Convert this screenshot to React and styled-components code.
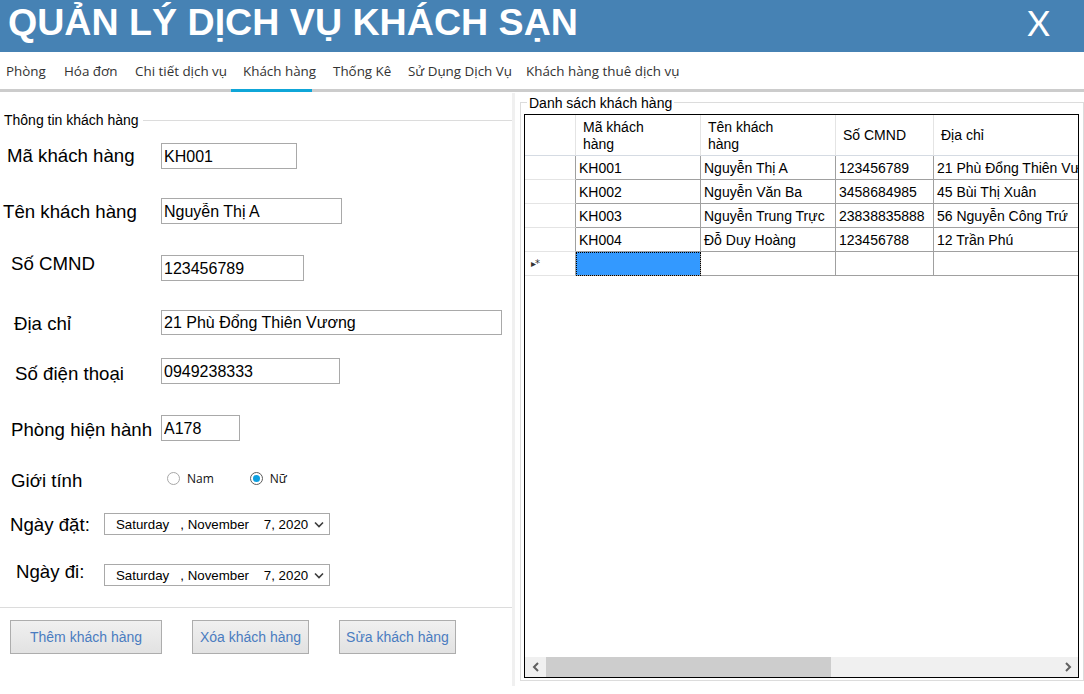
import React from 'react';
import styled, { createGlobalStyle, css } from 'styled-components';

const GlobalStyle = createGlobalStyle`
  html, body { margin: 0; padding: 0; background: #ffffff; }
  body { font-family: "Liberation Sans", Arial, sans-serif; color: #000; }
  *, *::before, *::after { box-sizing: border-box; }
`;

const Window = styled.div`
  width: 1084px;
  height: 694px;
  display: flex;
  flex-direction: column;
  overflow: hidden;
  background: #fff;
`;

const TitleBar = styled.header`
  flex: none;
  height: 52px;
  background: #4682b4;
  color: #fff;
  display: flex;
  justify-content: space-between;
  align-items: flex-start;
  padding: 0 34px 0 8px;
`;

const Title = styled.h1`
  margin: 0;
  font: 700 37.6px/44px "Liberation Sans", Arial, sans-serif;
  white-space: nowrap;
`;

const CloseButton = styled.span`
  padding-top: 1px;
  font: 400 35px/42px Lato, "Open Sans", sans-serif;
  cursor: pointer;
`;

const TabBar = styled.nav`
  flex: none;
  height: 40px;
  display: flex;
  align-items: stretch;
  padding-left: 6px;
  border-bottom: 3px solid #cccccc;
  font: 400 13.4px "Open Sans", sans-serif;
  color: #333;
`;

const Tab = styled.span`
  position: relative;
  flex: none;
  width: ${p => (p.$w ? `${p.$w}px` : 'auto')};
  display: flex;
  align-items: center;
  white-space: nowrap;
  ${p => p.$active && css`
    &::after {
      content: '';
      position: absolute;
      left: -12px;
      width: 81px;
      bottom: -3px;
      height: 3px;
      background: #0fa6d8;
    }
  `}
`;

const Body = styled.div`
  flex: 1;
  display: flex;
  min-height: 0;
`;

const LeftPanel = styled.section`
  width: 512px;
  flex: none;
  display: flex;
  flex-direction: column;
`;

const Splitter = styled.div`
  width: 3px;
  flex: none;
  background: #f0f0f0;
  margin: 1px 0 8px;
`;

const RightPanel = styled.section`
  flex: 1;
  min-width: 0;
  padding: 1px 0 0 5px;
`;

const GroupHeader = styled.div`
  display: flex;
  align-items: center;
  height: 16px;
  margin-top: 20px;
  padding-left: 4px;
  font: 14px/16px "Liberation Sans", Arial, sans-serif;
  white-space: nowrap;
`;

const GroupRule = styled.div`
  flex: 1;
  margin-left: 4px;
  border-top: 1px solid #dcdcdc;
`;

const FieldRow = styled.div`
  display: grid;
  grid-template-columns: ${p => p.$cx}px 1fr;
  align-items: start;
  margin-top: ${p => p.$mt}px;
`;

const FieldLabel = styled.label`
  padding-left: ${p => p.$lx}px;
  margin-top: ${p => p.$ly || 0}px;
  font: 18.67px/22px "Liberation Sans", Arial, sans-serif;
  white-space: nowrap;
`;

const Control = styled.div`
  margin-top: ${p => p.$cy || 0}px;
  display: flex;
  align-items: center;
`;

const TextBox = styled.input`
  width: ${p => p.$w}px;
  height: ${p => p.$h || 26}px;
  border: 1px solid #a9a9a9;
  padding: 1px 2px 0;
  margin: 0;
  font: 16px "Liberation Sans", Arial, sans-serif;
  color: #000;
  background: #fff;
  outline: none;
`;

const RadioGroup = styled.div`
  display: flex;
  align-items: center;
  height: 14px;
`;

const RadioOption = styled.span`
  display: flex;
  align-items: center;
  gap: 7px;
  margin-right: ${p => p.$mr || 0}px;
  font: 12px "Open Sans", sans-serif;
  color: #111;
`;

const RadioDot = styled.span`
  width: 13px;
  height: 13px;
  border-radius: 50%;
  border: 1px solid ${p => (p.$checked ? '#5c5c5c' : '#a8a8a8')};
  background: #fff;
  display: flex;
  align-items: center;
  justify-content: center;
  &::after {
    content: '';
    width: 7px;
    height: 7px;
    border-radius: 50%;
    background: ${p => (p.$checked ? '#0c9fe0' : 'transparent')};
  }
`;

const DateBox = styled.div`
  width: 226px;
  height: 22px;
  border: 1px solid #a9a9a9;
  background: #fff;
  display: flex;
  align-items: center;
  justify-content: space-between;
  padding: 0 5px 0 11px;
  font: 13.3px "Liberation Sans", Arial, sans-serif;
  white-space: pre;
`;

const Separator = styled.hr`
  margin: 21px 0 0;
  border: 0;
  border-top: 1px solid #dcdcdc;
  width: 512px;
`;

const ButtonRow = styled.div`
  display: flex;
  gap: 30px;
  padding-left: 10px;
  margin-top: 12px;
`;

const ActionButton = styled.button`
  width: ${p => p.$w}px;
  height: 34px;
  margin: 0;
  padding: 0;
  border: 1px solid #adadad;
  background: linear-gradient(#f0f0f0, #e2e2e2);
  color: #4a7cc0;
  font: 14px "Liberation Sans", Arial, sans-serif;
  cursor: pointer;
`;

const GroupBox = styled.fieldset`
  margin: 0;
  min-width: 0;
  border: 1px solid #dcdcdc;
  padding: 3px 4px 2px 3px;
`;

const GroupLegend = styled.legend`
  margin-left: 3px;
  padding: 2px 2px 0;
  font: 14px/16px "Liberation Sans", Arial, sans-serif;
`;

const GridBox = styled.div`
  height: 564px;
  border: 1px solid #000;
  background: #fff;
  display: flex;
  flex-direction: column;
  overflow: hidden;
`;

const GridViewport = styled.div`
  flex: 1;
  overflow: hidden;
`;

const GridRow = styled.div`
  display: grid;
  grid-template-columns: 51px 125px 135px 98px 240px;
  height: ${p => p.$h}px;
`;

const HeaderCell = styled.div`
  border-right: 1px solid #e4e4e4;
  border-bottom: 1px solid #d5dbe3;
  padding: 1px 0 0 7px;
  display: flex;
  align-items: center;
  font: 14px/17px "Liberation Sans", Arial, sans-serif;
  white-space: pre-line;
`;

const RowHeader = styled.div`
  border-right: 1px solid #a0a0a0;
  border-bottom: 1px solid #e4e4e4;
  display: flex;
  align-items: center;
  padding-left: 6px;
  color: #333;
  font: 10px "DejaVu Sans", sans-serif;
  letter-spacing: -1px;
`;

const Cell = styled.div`
  border-right: 1px solid #a0a0a0;
  border-bottom: 1px solid #a0a0a0;
  padding-left: 3px;
  display: flex;
  align-items: center;
  font: 14px "Liberation Sans", Arial, sans-serif;
  white-space: nowrap;
  overflow: hidden;
  ${p => p.$selected && css`
    background: #3399ff;
    outline: 1px dotted #000;
    outline-offset: -1px;
  `}
`;

const HScroll = styled.div`
  flex: none;
  height: 20px;
  background: #f0f0f0;
  display: flex;
  align-items: stretch;
`;

const ScrollArrow = styled.div`
  width: 21px;
  flex: none;
  display: flex;
  align-items: center;
  justify-content: center;
`;

const ScrollTrack = styled.div`
  flex: 1;
  display: flex;
`;

const ScrollThumb = styled.div`
  width: 285px;
  background: #cdcdcd;
`;

const Chevron = ({ dir }) => (
  <svg width="8" height="10" viewBox="0 0 8 10">
    <polyline
      points={dir === 'left' ? '6,1 2,5 6,9' : '2,1 6,5 2,9'}
      fill="none"
      stroke="#606060"
      strokeWidth="2"
    />
  </svg>
);

const DownChevron = () => (
  <svg width="10" height="7" viewBox="0 0 10 7">
    <polyline points="1,1.5 5,5.5 9,1.5" fill="none" stroke="#3c3c3c" strokeWidth="1.6" />
  </svg>
);

const tabs = [
  { label: 'Phòng', w: 58 },
  { label: 'Hóa đơn', w: 71 },
  { label: 'Chi tiết dịch vụ', w: 108 },
  { label: 'Khách hàng', w: 90, active: true },
  { label: 'Thống Kê', w: 75 },
  { label: 'Sử Dụng Dịch Vụ', w: 118 },
  { label: 'Khách hàng thuê dịch vụ' },
];

const textFields = [
  { label: 'Mã khách hàng', lx: 7, ly: 2, cy: 0, mt: 15, value: 'KH001', w: 136 },
  { label: 'Tên khách hàng', lx: 3, ly: 3, cy: 0, mt: 29, value: 'Nguyễn Thị A', w: 181 },
  { label: 'Số CMND', lx: 11, ly: 0, cy: 2, mt: 29, value: '123456789', w: 143 },
  { label: 'Địa chỉ', lx: 14, ly: 3, cy: 0, mt: 29, value: '21 Phù Đổng Thiên Vương', w: 341, h: 25 },
  { label: 'Số điện thoại', lx: 15, ly: 5, cy: 0, mt: 23, value: '0949238333', w: 179 },
  { label: 'Phòng hiện hành', lx: 11, ly: 4, cy: 0, mt: 30, value: 'A178', w: 79 },
];

const customers = [
  ['KH001', 'Nguyễn Thị A', '123456789', '21 Phù Đổng Thiên Vương'],
  ['KH002', 'Nguyễn Văn Ba', '3458684985', '45 Bùi Thị Xuân'],
  ['KH003', 'Nguyễn Trung Trực', '23838835888', '56 Nguyễn Công Trứ'],
  ['KH004', 'Đỗ Duy Hoàng', '123456788', '12 Trần Phú'],
];

const DATE_TEXT = 'Saturday   , November    7, 2020';

export default function App() {
  return (
    <>
      <GlobalStyle />
      <Window>
        <TitleBar>
          <Title>QUẢN LÝ DỊCH VỤ KHÁCH SẠN</Title>
          <CloseButton>X</CloseButton>
        </TitleBar>
        <TabBar>
          {tabs.map(t => (
            <Tab key={t.label} $w={t.w} $active={t.active}>{t.label}</Tab>
          ))}
        </TabBar>
        <Body>
          <LeftPanel>
            <GroupHeader>
              Thông tin khách hàng
              <GroupRule />
            </GroupHeader>
            {textFields.map(f => (
              <FieldRow key={f.label} $cx={161} $mt={f.mt}>
                <FieldLabel $lx={f.lx} $ly={f.ly}>{f.label}</FieldLabel>
                <Control $cy={f.cy}>
                  <TextBox $w={f.w} $h={f.h} defaultValue={f.value} />
                </Control>
              </FieldRow>
            ))}
            <FieldRow $cx={167} $mt={29}>
              <FieldLabel $lx={11}>Giới tính</FieldLabel>
              <Control $cy={1}>
                <RadioGroup>
                  <RadioOption $mr={36}>
                    <RadioDot />
                    Nam
                  </RadioOption>
                  <RadioOption>
                    <RadioDot $checked />
                    Nữ
                  </RadioOption>
                </RadioGroup>
              </Control>
            </FieldRow>
            <FieldRow $cx={104} $mt={21}>
              <FieldLabel $lx={10} $ly={1}>Ngày đặt:</FieldLabel>
              <Control>
                <DateBox>
                  <span>{DATE_TEXT}</span>
                  <DownChevron />
                </DateBox>
              </Control>
            </FieldRow>
            <FieldRow $cx={104} $mt={25}>
              <FieldLabel $lx={16}>Ngày đi:</FieldLabel>
              <Control $cy={3}>
                <DateBox>
                  <span>{DATE_TEXT}</span>
                  <DownChevron />
                </DateBox>
              </Control>
            </FieldRow>
            <Separator />
            <ButtonRow>
              <ActionButton $w={152}>Thêm khách hàng</ActionButton>
              <ActionButton $w={117}>Xóa khách hàng</ActionButton>
              <ActionButton $w={117}>Sửa khách hàng</ActionButton>
            </ButtonRow>
          </LeftPanel>
          <Splitter />
          <RightPanel>
            <GroupBox>
              <GroupLegend>Danh sách khách hàng</GroupLegend>
              <GridBox>
                <GridViewport>
                  <GridRow $h={41}>
                    <HeaderCell />
                    <HeaderCell>{'Mã khách\nhàng'}</HeaderCell>
                    <HeaderCell>{'Tên khách\nhàng'}</HeaderCell>
                    <HeaderCell>Số CMND</HeaderCell>
                    <HeaderCell>Địa chỉ</HeaderCell>
                  </GridRow>
                  {customers.map(r => (
                    <GridRow key={r[0]} $h={24}>
                      <RowHeader />
                      {r.map((v, i) => (
                        <Cell key={i}>{v}</Cell>
                      ))}
                    </GridRow>
                  ))}
                  <GridRow $h={24}>
                    <RowHeader>▸*</RowHeader>
                    <Cell $selected />
                    <Cell />
                    <Cell />
                    <Cell />
                  </GridRow>
                </GridViewport>
                <HScroll>
                  <ScrollArrow><Chevron dir="left" /></ScrollArrow>
                  <ScrollTrack>
                    <ScrollThumb />
                  </ScrollTrack>
                  <ScrollArrow><Chevron dir="right" /></ScrollArrow>
                </HScroll>
              </GridBox>
            </GroupBox>
          </RightPanel>
        </Body>
      </Window>
    </>
  );
}
